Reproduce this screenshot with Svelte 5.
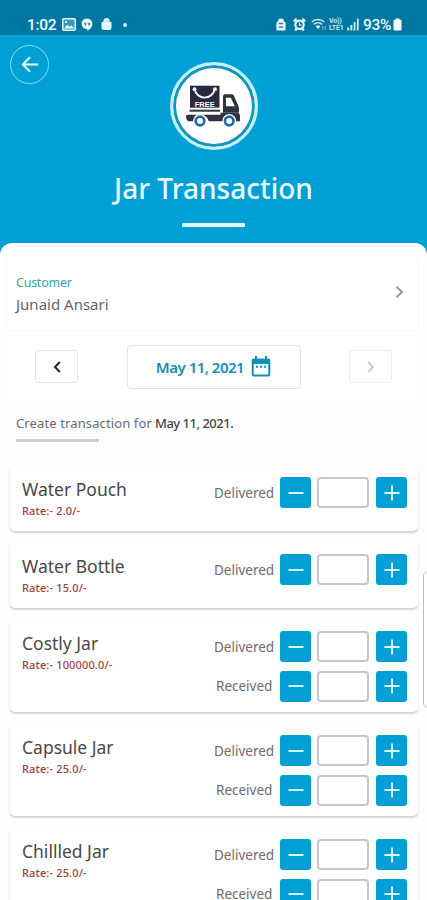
<script>
  const jars = [
    { name: 'Water Pouch', rate: '2.0', rows: ['Delivered'] },
    { name: 'Water Bottle', rate: '15.0', rows: ['Delivered'] },
    { name: 'Costly Jar', rate: '100000.0', rows: ['Delivered', 'Received'] },
    { name: 'Capsule Jar', rate: '25.0', rows: ['Delivered', 'Received'] },
    { name: 'Chillled Jar', rate: '25.0', rows: ['Delivered', 'Received'] }
  ];
</script>

<div class="screen">
  <div class="status">
    <div class="left">
      <span class="clock">1:02</span>
      <svg class="pic" width="14" height="13" viewBox="0 0 14 13"><rect x=".8" y=".8" width="12.4" height="11.4" rx="1" fill="#dff8ff" fill-opacity=".25" stroke="#e4faff" stroke-width="1.5" /><path d="M2 10.5l3.2-4 2.3 2.3 1.8-1.6 2.8 3.3z" fill="#e4faff" /><circle cx="4" cy="4" r="1.1" fill="#e4faff" /></svg>
      <svg class="chat" width="12" height="14" viewBox="0 0 12 14"><path d="M6 .5a5.5 5.3 0 0 1 5.5 5.3c0 2.8-2.2 5.6-5.2 7.2v-2A5.4 5.4 0 0 1 .5 5.8A5.5 5.3 0 0 1 6 .5z" fill="#f2fdff" /><path d="M3 4.7h2.500v2l-1.300 1.300zM6.500 4.700H9v2L7.700 8z" fill="#3b8fac" /></svg>
      <svg class="bag" width="11" height="13" viewBox="0 0 11 13"><path d="M.5 4h10v5.500a2.500 2.500 0 0 1-2.500 2.500H3A2.500 2.500 0 0 1 .5 9.500z" fill="#e4faff" /><path d="M3 4.500V3a2.500 2.300 0 0 1 5 0v1.500" fill="#c4e9f4" stroke="#e4faff" stroke-width="1.300" /></svg>
      <i class="dot"></i>
    </div>
    <div class="right">
      <svg width="10" height="13" viewBox="0 0 10 13"><path d="M2 3.500V3a3 2.500 0 0 1 6 0v.500A2 2 0 0 1 9.600 5v6.500q0 1-1 1H1.400q-1 0-1-1V5A2 2 0 0 1 2 3.500z" fill="#e4faff" /><path d="M2.800 5.500h4.400M2.800 9h4.400" stroke="#2684a5" stroke-width="1.300" /></svg>
      <svg class="alarm" width="13" height="13" viewBox="0 0 13 13"><circle cx="6.500" cy="6.800" r="4.200" fill="none" stroke="#e4faff" stroke-width="2.100" /><path d="M.8 3.400L3.600.9M12.200 3.400L9.400.9M2.200 12.500l1.500-1.900M10.800 12.500l-1.500-1.900" stroke="#e4faff" stroke-width="2.300" /><path d="M6.500 4.500v2.600h2" fill="none" stroke="#e4faff" stroke-width="1.100" /></svg>
      <svg class="wifi" width="16" height="13" viewBox="0 0 16 13"><path d="M.7 4A9.500 9.500 0 0 1 13.300 4M2.900 6.400a6.200 6.200 0 0 1 8.200 0" fill="none" stroke="#c4ecf6" stroke-width="1.500" /><path d="M4.700 8.400a3.400 3.400 0 0 1 4.600 0L7 11z" fill="#e4faff" /><path d="M11.800 8v4M14.200 8v4" stroke="#7cc0d6" stroke-width="1" /></svg>
      <span class="lte"><b>Vo))</b><b>LTE1</b></span>
      <svg class="signal" width="12" height="13" viewBox="0 0 12 13"><path d="M1.200 12.500V9.500M4.400 12.500V7" stroke="#c4ecf6" stroke-width="2" /><path d="M7.600 12.500V4M10.800 12.500V0.500" stroke="#c4ecf6" stroke-width="1.800" /></svg>
      <span class="pct">93%</span>
      <svg width="9" height="13" viewBox="0 0 9 13"><path d="M2.500.5h4v1.300h1.200q.8 0 .8.800v9q0 .9-.8.900H1.300q-.8 0-.8-.9v-9q0-.8.8-.8h1.200z" fill="#f4feff" /></svg>
    </div>
  </div>

  <header>
    <button class="back" aria-label="Back">
      <svg width="18" height="18" viewBox="0 0 18 18"><path d="M17 8.500H2M9 1.300L1.800 8.500 9 15.700" fill="none" stroke="#e6fbff" stroke-width="2" /></svg>
    </button>
    <div class="logo">
      <svg width="76" height="76" viewBox="0 -1.700 76 76">
        <path d="M14 16H43.500V38H14z" fill="#262b42" />
        <path d="M18.500 18.500c1.500 12.500 18.500 12.500 20.500 0" fill="none" stroke="#fff" stroke-width="1.900" />
        <circle cx="18.500" cy="19.500" r="1.900" fill="#fff" /><circle cx="39" cy="19.500" r="1.900" fill="#fff" />
        <text x="18.700" y="37" textLength="20" lengthAdjust="spacingAndGlyphs" font-family="Liberation Sans, sans-serif" font-size="7.500" font-weight="700" fill="#fff">FREE</text>
        <path d="M13.500 41H44" stroke="#30354a" stroke-width="2" />
        <path d="M47 42V26.500q0-2 2-2h6.500q1.600 0 2.300 1.400l4.500 10.200q.7 1.500.7 3V43H47z" fill="#30343f" />
        <path d="M50 28h4.800l4 8.500H50z" fill="#fff" />
        <path d="M12 45h32.500V43H62q2 1 2 3v5.500h-3.800a7 7 0 0 0-13.600 0H32.700a7 7 0 0 0-13.600 0H12q-2.200-2-2-5 0-1.500 2-1.500z" fill="#30343f" />
        <circle cx="24" cy="51.300" r="6.900" fill="#fff" /><circle cx="53.200" cy="51.300" r="6.900" fill="#fff" />
        <circle cx="24" cy="51.300" r="4.300" fill="#fff" stroke="#246aa8" stroke-width="2.700" />
        <circle cx="53.200" cy="51.300" r="4.300" fill="#fff" stroke="#246aa8" stroke-width="2.700" />
      </svg>
    </div>
    <h1>Jar Transaction</h1>
    <i class="rule"></i>
  </header>

  <main>
    <section class="panel">
      <div class="customer">
        <div>
          <div class="label">Customer</div>
          <div class="who">Junaid Ansari</div>
        </div>
        <svg width="9" height="14" viewBox="0 0 9 14"><path d="M1.500 1.700L7 7l-5.500 5.300" fill="none" stroke="#999" stroke-width="2" /></svg>
      </div>
      <div class="dates">
        <button class="nav" aria-label="Previous day"><svg width="8" height="12" viewBox="0 0 8 12"><path d="M6.800 1L2 6l4.800 5" fill="none" stroke="#262626" stroke-width="2" /></svg></button>
        <button class="date">
          <span>May 11, 2021</span>
          <svg width="20" height="21" viewBox="0 0 20 21"><path d="M2.500 2.500H17.500Q19.300 2.500 19.300 4.500V18.500Q19.300 20.500 17.500 20.500H2.500Q.7 20.500.7 18.500V4.500Q.7 2.500 2.500 2.500zM2.700 8V18.500H17.300V8z" fill="#118fb4" fill-rule="evenodd" /><path d="M5 0v4M15 0v4" stroke="#118fb4" stroke-width="2" /><path d="M5 10.800h2M9 10.800h2M13 10.800h2" stroke="#118fb4" stroke-width="2" /></svg>
        </button>
        <button class="nav off" aria-label="Next day"><svg width="8" height="12" viewBox="0 0 8 12"><path d="M1.200 1L6 6l-4.800 5" fill="none" stroke="#ccc" stroke-width="2" /></svg></button>
      </div>
    </section>

    <p class="note"><span>Create transaction for</span><b>May 11, 2021.</b></p>
    <i class="under"></i>

    <div class="list">
      {#each jars as jar}
        <article>
          <div class="info">
            <div class="name">{jar.name}</div>
            <div class="rate">Rate:- {jar.rate}/-</div>
          </div>
          <div class="rows">
            {#each jar.rows as row}
              <div class="row">
                <span class={row.toLowerCase()}>{row}</span>
                <button class="step" aria-label="Decrease"><svg width="16" height="16" viewBox="0 0 16 16"><path d="M.5 8h15" stroke="#d8f7ff" stroke-width="2" /></svg></button>
                <div class="qty"></div>
                <button class="step" aria-label="Increase"><svg width="16" height="16" viewBox="0 0 16 16"><path d="M.5 8h15M8 .5v15" stroke="#d8f7ff" stroke-width="2" /></svg></button>
              </div>
            {/each}
          </div>
        </article>
      {/each}
    </div>
  </main>
  <i class="edge"></i>
</div>

<style>
  .screen { position: relative; width: 427px; height: 900px; overflow: hidden; background: #009fd6; font-family: 'Noto Sans', sans-serif; display: flex; flex-direction: column; }
  button { padding: 0; margin: 0; border: 0; display: flex; align-items: center; justify-content: center; box-sizing: border-box; }
  svg { display: block; flex: none; }
  i { display: block; }
  .status { height: 35px; flex: none; background: #0077a2; display: flex; justify-content: space-between; padding: 14px 25px 0 27px; box-sizing: border-box; color: #e9fbff; font-family: Roboto, sans-serif; font-size: 15.5px; line-height: 22px; }
  .left, .right { display: flex; align-items: center; height: 21px; }
  .clock { width: 35px; white-space: nowrap; font-weight: 500; letter-spacing: -.3px; }
  .chat { margin-left: 5px; }
  .bag { margin-left: 8px; }
  .dot { width: 4px; height: 4px; border-radius: 2px; background: #d5f5fc; margin-left: 11px; }
  .alarm { margin-left: 7px; }
  .wifi { margin-left: 5px; }
  .lte { display: flex; flex-direction: column; width: 16px; margin-left: 2px; color: #bfe7f2; font-size: 7px; line-height: 6.5px; letter-spacing: -.2px; }
  .signal { margin-left: 2px; }
  .pct { width: 30px; margin-left: 4px; font-weight: 500; letter-spacing: -.3px; white-space: nowrap; }
  header { height: 208px; flex: none; display: flex; flex-direction: column; align-items: center; }
  .back { align-self: flex-start; width: 39px; height: 39px; margin: 10px 0 0 10px; border: 1.5px solid #7fe3f5; border-radius: 50%; background: none; }
  .logo { width: 88px; height: 88px; margin-top: -22px; border-radius: 50%; box-sizing: border-box; border: 3px solid #bff3fb; background: #fff; box-shadow: inset 0 0 0 3px #1795bd; display: flex; align-items: center; justify-content: center; }
  h1 { margin: 18px 0 0; font-size: 28px; line-height: 40px; font-weight: 500; color: #e6fbff; white-space: nowrap; }
  .rule { width: 63px; height: 4px; border-radius: 1px; background: #dcf8fd; margin-top: 15px; }
  main { flex: 1; min-height: 0; background: #fefefe; border-radius: 12px 12px 0 0; overflow: hidden; }
  .panel { height: 148px; margin: 11px 9px 0 7px; background: #fff; box-shadow: 0 0 2px rgba(0,0,0,.05); border-radius: 4px; }
  .customer { height: 76px; display: flex; align-items: center; justify-content: space-between; padding: 0 14px 0 9px; box-shadow: 0 1px 2px rgba(0,0,0,.04); box-sizing: border-box; }
  .label { font-size: 12.5px; line-height: 20px; margin-top: 3px; letter-spacing: -.25px; color: #35a5a5; }
  .who { font-size: 15px; line-height: 22px; color: #666; }
  .dates { display: flex; align-items: center; justify-content: space-between; padding: 1px 26px 0 28px; height: 72px; box-sizing: border-box; }
  .nav { width: 43px; height: 33px; border: 1.5px solid #e5e5e5; border-radius: 3px; background: #fff; }
  .off { border-color: #eee; }
  .date { width: 174px; height: 44px; border: 1.5px solid #e5e5e5; border-radius: 4px; background: #fff; gap: 7px; font: 600 15px 'Noto Sans', sans-serif; letter-spacing: -.5px; color: #118fb4; white-space: nowrap; }
  .note { display: flex; margin: 11px 0 0 16px; font-size: 13px; line-height: 20px; color: #6a6a6a; white-space: nowrap; }
  .note span { width: 139px; letter-spacing: .12px; }
  .note b { font-weight: 500; color: #444; letter-spacing: -.5px; }
  .under { width: 83px; height: 3px; margin: 6px 0 0 16px; background: #cfcfcf; }
  .list { padding: 24px 9px 0 10px; display: flex; flex-direction: column; gap: 12px; }
  article { display: flex; justify-content: space-between; padding: 11px 11px 11px 12px; background: #fff; border-radius: 5px; box-shadow: 0 1.5px 2px rgba(0,0,0,.18); min-height: 65px; box-sizing: border-box; }
  article:has(.received) { height: 92px; }
  .name { font-size: 17.5px; line-height: 24px; color: #484848; white-space: nowrap; }
  .rate { font-size: 11px; line-height: 16px; margin-top: 2px; color: #a04040; font-weight: 500; letter-spacing: .15px; white-space: nowrap; }
  .rows { display: flex; flex-direction: column; gap: 8.5px; }
  .row { display: flex; align-items: center; }
  .row span { font-size: 13.5px; line-height: 20px; color: #6c6c6c; width: 66px; box-sizing: border-box; }
  .row .received { padding-left: 2px; }
  .step { width: 31px; height: 31px; border-radius: 3px; background: #009fd5; }
  .qty { width: 52px; height: 31px; border: 2px solid #c8c8c8; border-radius: 4px; margin: 0 7px 0 6px; background: #fff; box-sizing: border-box; }
  .edge { position: absolute; left: 423px; top: 571px; width: 10px; height: 137px; border: 1.5px solid #bcbcbc; border-radius: 5px; background: #fff; box-sizing: border-box; }
</style>
